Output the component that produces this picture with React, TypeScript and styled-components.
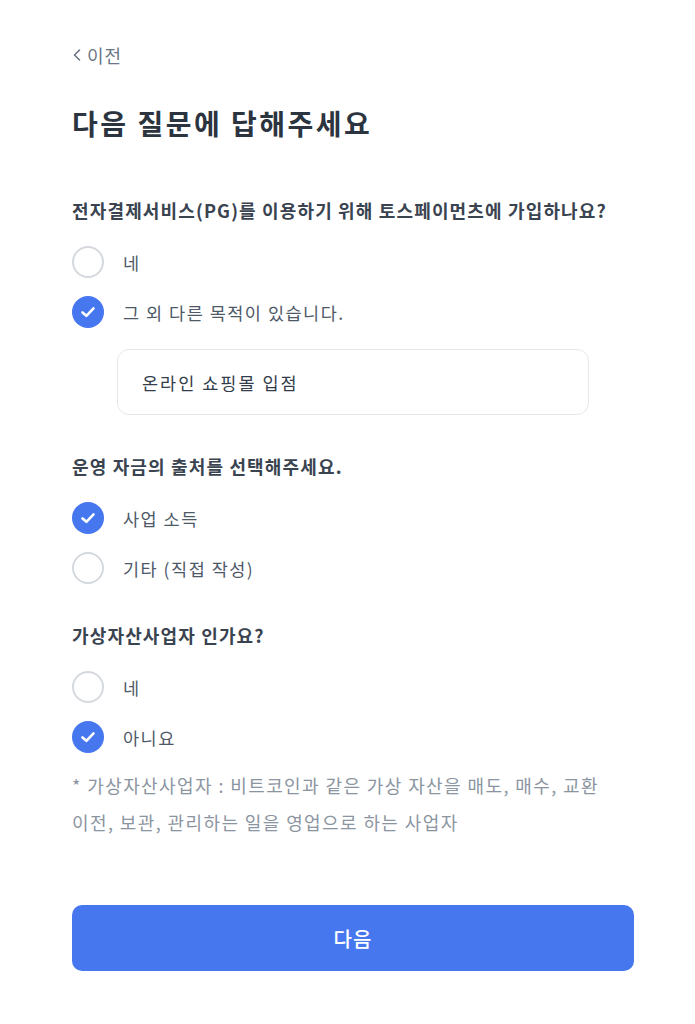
import React, { FC, useState } from 'react';
import styled, { createGlobalStyle } from 'styled-components';

const GlobalStyle = createGlobalStyle`
  html, body {
    margin: 0;
    padding: 0;
    background: #ffffff;
  }
  body {
    font-family: 'Noto Sans CJK KR', 'Noto Sans', sans-serif;
    -webkit-font-smoothing: antialiased;
  }
`;

const Page = styled.div`
  width: 695px;
  min-height: 1024px;
  box-sizing: border-box;
  padding: 43px 61px 0 72px;
  display: flex;
  flex-direction: column;
`;

const BackLink = styled.button`
  align-self: flex-start;
  display: flex;
  align-items: center;
  gap: 5px;
  padding: 0;
  border: none;
  background: none;
  font-family: inherit;
  font-size: 18px;
  line-height: 24px;
  letter-spacing: 1px;
  color: #6b7684;
  cursor: pointer;
`;

const Title = styled.h1`
  margin: 36px 0 0;
  font-size: 28px;
  line-height: 40px;
  font-weight: 700;
  color: #2c3440;
  letter-spacing: 2.5px;
`;

const Section = styled.section<{ $gap: number }>`
  margin-top: ${p => p.$gap}px;
  display: flex;
  flex-direction: column;
`;

const Question = styled.h2`
  margin: 0 0 14px;
  font-size: 18px;
  line-height: 26px;
  font-weight: 700;
  color: #3a4350;
  letter-spacing: 1.15px;
`;

const OptionRow = styled.label`
  height: 50px;
  display: flex;
  align-items: center;
  gap: 19px;
  font-size: 17.5px;
  letter-spacing: 1.5px;
  color: #4e5968;
  cursor: pointer;
`;

const Circle = styled.span<{ $checked: boolean }>`
  width: 32px;
  height: 32px;
  flex-shrink: 0;
  box-sizing: border-box;
  border-radius: 50%;
  border: ${p => (p.$checked ? 'none' : '2.5px solid #d5d9de')};
  background: ${p => (p.$checked ? '#4677ef' : '#ffffff')};
  display: flex;
  align-items: center;
  justify-content: center;
`;

const TextBox = styled.input`
  margin: 12px 45px 0;
  height: 66px;
  box-sizing: border-box;
  padding: 0 24px;
  border: 1px solid #e5e8eb;
  border-radius: 12px;
  font-family: inherit;
  font-size: 17.5px;
  letter-spacing: 2px;
  color: #333d4b;
  outline: none;
  background: #ffffff;
`;

const Note = styled.p`
  margin: 5px 0 0;
  font-size: 18px;
  line-height: 37px;
  letter-spacing: 1.4px;
  color: #8b95a1;
`;

const NextButton = styled.button`
  margin-top: 64px;
  height: 66px;
  border: none;
  border-radius: 10px;
  background: #4677ef;
  color: #ffffff;
  font-family: inherit;
  font-size: 20px;
  letter-spacing: 1px;
  font-weight: 500;
  cursor: pointer;
`;

const Check: FC = () => (
  <svg width="18" height="18" viewBox="0 0 18 18" fill="none">
    <path d="M3.5 9.4 L7.4 12.8 L14.5 5.4" stroke="#ffffff" strokeWidth="2.6" strokeLinecap="round" strokeLinejoin="round" />
  </svg>
);

const Chevron: FC = () => (
  <svg width="10" height="16" viewBox="0 0 10 16" fill="none">
    <path d="M7.5 3 L2.5 8 L7.5 13" stroke="#6b7684" strokeWidth="1.6" strokeLinecap="round" strokeLinejoin="round" />
  </svg>
);

type OptionProps = { label: string; checked: boolean; onSelect: () => void };

const Option: FC<OptionProps> = ({ label, checked, onSelect }) => (
  <OptionRow onClick={onSelect}>
    <Circle $checked={checked}>{checked && <Check />}</Circle>
    {label}
  </OptionRow>
);

const App: FC = () => {
  const [pg, setPg] = useState(1);
  const [fund, setFund] = useState(0);
  const [vasp, setVasp] = useState(1);
  const [purpose, setPurpose] = useState('온라인 쇼핑몰 입점');

  return (
    <Page>
      <GlobalStyle />
      <BackLink>
        <Chevron />
        이전
      </BackLink>
      <Title>다음 질문에 답해주세요</Title>

      <Section $gap={54}>
        <Question>전자결제서비스(PG)를 이용하기 위해 토스페이먼츠에 가입하나요?</Question>
        <Option label="네" checked={pg === 0} onSelect={() => setPg(0)} />
        <Option label="그 외 다른 목적이 있습니다." checked={pg === 1} onSelect={() => setPg(1)} />
        {pg === 1 && <TextBox value={purpose} onChange={e => setPurpose(e.target.value)} />}
      </Section>

      <Section $gap={38}>
        <Question>운영 자금의 출처를 선택해주세요.</Question>
        <Option label="사업 소득" checked={fund === 0} onSelect={() => setFund(0)} />
        <Option label="기타 (직접 작성)" checked={fund === 1} onSelect={() => setFund(1)} />
      </Section>

      <Section $gap={29}>
        <Question>가상자산사업자 인가요?</Question>
        <Option label="네" checked={vasp === 0} onSelect={() => setVasp(0)} />
        <Option label="아니요" checked={vasp === 1} onSelect={() => setVasp(1)} />
        <Note>
          * 가상자산사업자 : 비트코인과 같은 가상 자산을 매도, 매수, 교환
          <br />
          이전, 보관, 관리하는 일을 영업으로 하는 사업자
        </Note>
      </Section>

      <NextButton>다음</NextButton>
    </Page>
  );
};

export default App;
